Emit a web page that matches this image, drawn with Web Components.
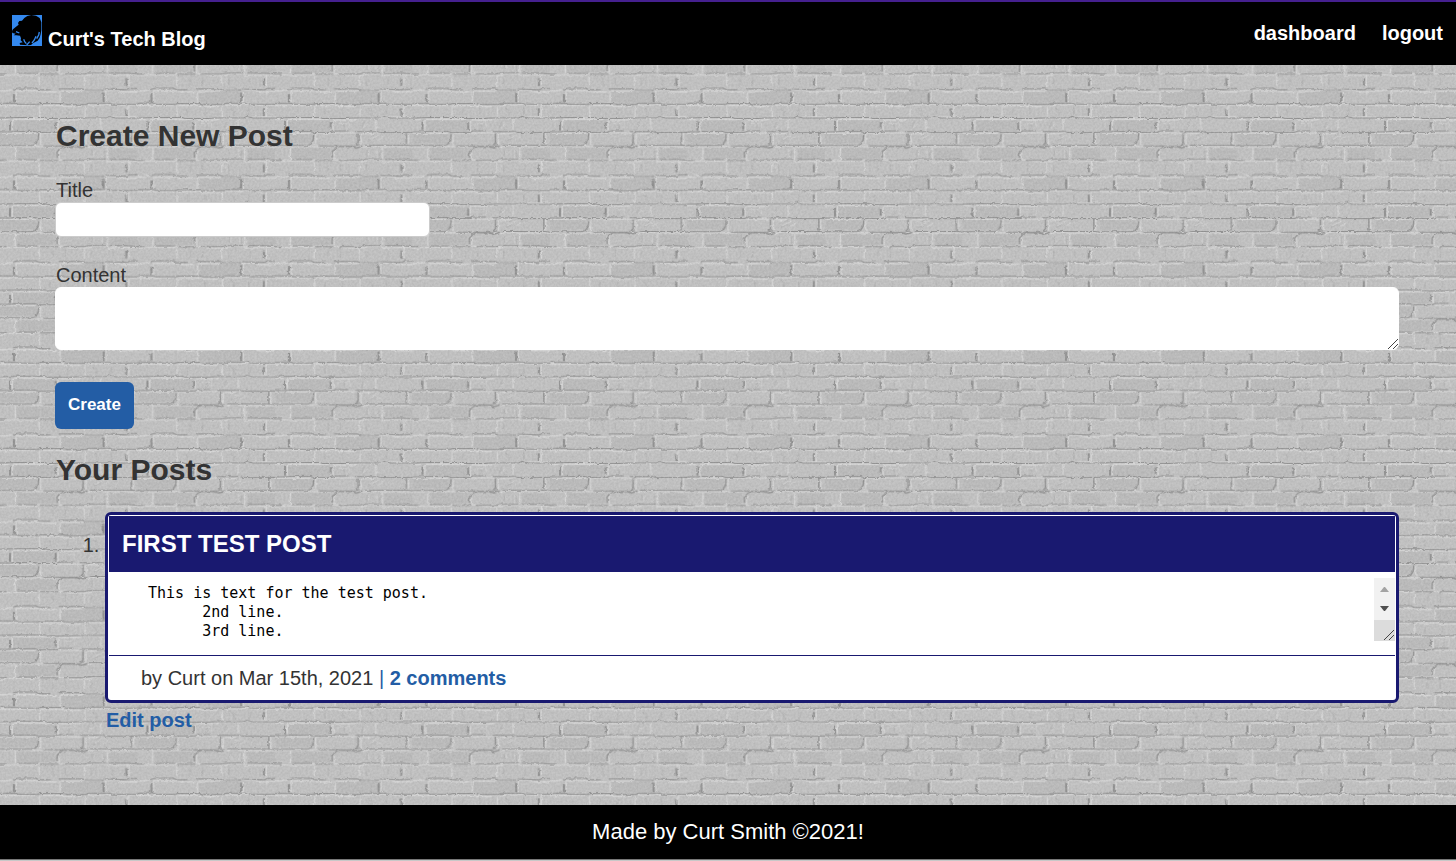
<!DOCTYPE html>
<html lang="en">
<head>
<meta charset="utf-8">
<meta name="viewport" content="width=device-width, initial-scale=1">
<title>Curt's Tech Blog</title>
<style>
  body { margin: 0; }
</style>
</head>
<body>
<blog-app></blog-app>

<script>
/* One brick tile, drawn at three times its size and repeated by a pattern. */
const wall = `<svg xmlns="http://www.w3.org/2000/svg" width="550" height="345">
<defs>
<pattern id="b" width="412.5" height="258.75" patternUnits="userSpaceOnUse" patternTransform="scale(.33333)">
<rect width="413" height="259" fill="#c0c0c0"/>
<g fill="#b9b9b9"><path d="M185 16h122v33H185zM40 103h124v30H40zM0 142h110v28H0zM52 186h112v30H52zM330 188h83v28h-83z"/></g>
<g fill="none" stroke="#d6d6d6" stroke-width="4">
<path d="M0 14h20l6-2h12M48 14h70l8 3h45M182 15h60l10-3h52M316 13h40l5 4h52"/>
<path d="M0 58h108M122 58h66l6 3h50M262 57h50l5-3 60 4M388 57h25"/>
<path d="M0 100h26M38 99h124M176 101h60l12-4h70l6-4h89"/>
<path d="M0 141h108M124 140h122M262 142h26l24-4h80"/>
<path d="M0 181h166M176 188l14-8h54l22 3 22-6 30 5h95"/>
<path d="M0 228l28-3h82l8-4h80l10 5h60l9-4h40l8 5 44-2h44"/>
<path d="M48 14v34M180 15v34M318 14v34M119 57v36M255 58v34M386 57v36M37 101v32M174 103v30M302 98v32M122 142v34M258 143v32M400 140v34M46 184v36M178 188v30M322 184v34M118 228v31M253 228v31M387 226v33"/>
</g>
<g fill="none" stroke="#8e8e8e" stroke-width="4">
<path d="M0 51h48l6 3h60l6-2h70l10 2h60l5-3h66l6 3h76M0 95l55-1h80l8 3h72l14-2h90l8-4 20 4h66M0 137h34l6-2h66l8 3h58l10-4h38M240 136h68l8 2h97M0 178h96l12-5M130 179h110l14-4M270 177h130l13 2" stroke-width="3"/>
<path d="M0 222h20M52 220h60M120 222h55M190 222h64l10-3h54M330 219h50l33 3M40 10l12-4h56l9 5h34M176 8h70l11 4h54M315 9l66 2 8-4h24" stroke-width="3"/>
<path d="M116 144l-2 18-8 12M249 142v27l-7 7M394 140v34M171 215v-18l8-9 9-7h42l14 4 18-5"/>
<path d="M42 24v24M311 19v29" stroke-width="7"/><path d="M379 66v23M30 106v27M167 108v22M379 234v24" stroke-width="6"/>
</g>
<path d="M150 66v20M203 64v23M278 65l12 8v16M334 65v21M207 108v20M268 106l-8 20M290 148l14-7M280 165l20-9M276 191v19M312 192v22M159 236v18M196 234v20M274 234v21M338 236v18" fill="none" stroke="#b2b2b2" stroke-width="3"/>
<path d="M190 112h25M222 105v20M278 112l-13 12M285 160l28-15M307 163l18-12M281 194v15M307 191v22M266 236v18" fill="none" stroke="#cfcfcf" stroke-width="3"/>
</pattern>
<filter id="r" x="0" y="0" width="1" height="1" color-interpolation-filters="sRGB">
<feTurbulence type="fractalNoise" baseFrequency=".24" numOctaves="2" seed="4" stitchTiles="stitch" result="n"/>
<feDisplacementMap in="SourceGraphic" in2="n" scale="3" xChannelSelector="R" yChannelSelector="G"/>
</filter>
<filter id="g" x="0" y="0" width="1" height="1" color-interpolation-filters="sRGB">
<feTurbulence type="fractalNoise" baseFrequency=".45" numOctaves="2" seed="9" stitchTiles="stitch"/>
<feColorMatrix values=".8 0 0 0 .34 .8 0 0 0 .34 .8 0 0 0 .34 0 0 0 0 .17"/>
</filter>
</defs>
<rect width="550" height="345" fill="#c0c0c0"/>
<rect width="550" height="345" fill="url(#b)" filter="url(#r)"/>
<rect width="550" height="345" filter="url(#g)" opacity=".7"/>
</svg>`;
const wallUrl = 'data:image/svg+xml,' + encodeURIComponent(wall);

function define(name, html, setup) {
  const template = document.createElement('template');
  template.innerHTML = html;
  customElements.define(name, class extends HTMLElement {
    constructor() {
      super();
      this.attachShadow({ mode: 'open' }).append(template.content.cloneNode(true));
    }
    connectedCallback() { if (setup) setup(this); }
  });
}

define('site-header', `
<style>
  :host { display: block; background: #000; border-top: 2px solid #45208f; font-weight: bold; }
  header { display: flex; justify-content: space-between; align-items: flex-start; padding: 13px 13px 19px 12px; }
  a { color: #fff; text-decoration: none; }
  .brand { display: flex; align-items: flex-start; gap: 6px; height: 31px; }
  .brand svg { display: block; flex: none; }
  .brand span { padding-top: 12px; }
  nav { display: flex; gap: 26px; padding-top: 6px; }
</style>
<header>
  <a class="brand" href="#home">
    <svg width="30" height="31" viewBox="0 0 90 93" aria-hidden="true">
      <path fill="#3489ef" d="M0 0h90v93H0z"/>
      <path d="M0 48L3 43L14 34L20 29L18 24L22 18L30 17L37 9L46 3L58 0L72 2L83 9L88 22V46L86 58L83 68L77 77L71 80L64 84L57 90L48 91L36 90L24 89L23 84L32 82L26 76L27 70L24 62L13 61L5 61L11 56L1 54Z"/>
      <path d="M35 73L38 80L43 86M44 90L53 80M60 84L67 75L72 64M74 71L80 60L82 51M12 50L22 54" fill="none" stroke="#3489ef" stroke-width="4"/>
    </svg>
    <span>Curt's Tech Blog</span>
  </a>
  <nav><a href="#dashboard">dashboard</a><a href="#logout">logout</a></nav>
</header>`);

define('new-post-form', `
<style>
  :host { display: block; }
  form { display: flex; flex-direction: column; align-items: flex-start; }
  label { display: block; padding-left: 1px; }
  input, textarea { box-sizing: border-box; margin: 0; padding: 6px 8px; border: 1px solid #ccc; border-radius: 6px; background: #fff; color: #333; font: inherit; outline: 0; }
  input { width: 375px; max-width: 100%; height: 35px; margin-bottom: 26px; }
  .area { position: relative; width: 100%; margin-bottom: 32px; }
  textarea { display: block; width: 100%; height: 63px; border-color: #fff; resize: none; }
  .grip { position: absolute; right: 1px; bottom: 1px; }
  button { height: 47px; padding: 0 13px 2px; border: 0; border-radius: 6px; background: #235da5; color: #fff; font: bold 17px/20px "Liberation Sans", Arial, sans-serif; }
</style>
<form>
  <label for="title">Title</label>
  <input id="title" type="text">
  <label for="content">Content</label>
  <div class="area">
    <textarea id="content"></textarea>
    <svg class="grip" width="10" height="10" aria-hidden="true"><path d="M0 10L10 0M5 10l5-5" stroke="#444" fill="none"/></svg>
  </div>
  <button type="button">Create</button>
</form>`);

define('post-card', `
<style>
  :host { display: block; border: 3px solid #191970; border-radius: 6px; background: #fff; padding: 1px 1px 0; }
  h3 { margin: 0; padding: 14px 13px; background: #191970; color: #fff; font-size: 24px; line-height: 28px; text-transform: uppercase; }
  .body { display: flex; padding: 6px 0 14px; border-bottom: 1px solid #191970; }
  textarea { flex: 1; min-width: 0; box-sizing: border-box; height: 63px; margin: 0; padding: 6px 0 0 39px; border: 0; background: #fff; color: #000; font: 15px/19px "DejaVu Sans Mono", monospace; resize: none; overflow: hidden; outline: 0; }
  svg { display: block; flex: none; }
  footer { padding: 10px 32px; }
</style>
<h3><slot name="title"></slot></h3>
<div class="body">
  <textarea readonly aria-label="Post text"></textarea>
  <svg width="21" height="63" aria-hidden="true">
    <path fill="#f1f1f1" d="M0 0h21v42H0z"/><path fill="#dcdcdc" d="M0 42h21v21H0z"/>
    <path fill="#a3a3a3" d="M6 14l4-5h1l4 5z"/><path fill="#505050" d="M6 28h9l-4 5h-1z"/>
    <path stroke="#444" d="M10 62l10-10M15 62l5-5"/>
  </svg>
</div>
<footer><slot></slot></footer>`, el => {
  el.shadowRoot.querySelector('textarea').value = el.getAttribute('text');
});

define('post-list', `
<style>
  :host { display: block; }
  ol { margin: 0; padding-left: 50px; }
  a { color: #235da5; font-weight: bold; text-decoration: none; }
  .bar { color: #235da5; }
  .edit { display: block; width: fit-content; margin: 5px 0 0 1px; }
</style>
<ol>
  <li>
    <post-card text="This is text for the test post.&#10;      2nd line.&#10;      3rd line."><span slot="title">First test post</span>by Curt on Mar 15th, 2021 <span class="bar">|</span> <a href="#comments">2 comments</a></post-card>
    <a class="edit" href="#edit">Edit post</a>
  </li>
</ol>`);

define('site-footer', `
<style>
  :host { display: block; background: #000; color: #fff; border-bottom: 1px solid #c8c8c8; text-align: center; }
  footer { padding: 14px 16px; font-size: 22px; line-height: 26px; border-bottom: 1px solid #777; }
</style>
<footer>Made by Curt Smith ©2021!</footer>`);

define('blog-app', `
<style>
  :host { display: flex; flex-direction: column; min-height: 100vh; color: #333; font: 20px/24px "Liberation Sans", Arial, sans-serif; background: #c0c0c0 var(--wall); }
  main { flex: 1; padding: 53px 57px 40px 55px; }
  h2 { margin: 0 0 24px; padding-left: 1px; font-size: 30px; line-height: 36px; }
  new-post-form { margin-bottom: 23px; }
</style>
<site-header></site-header>
<main>
  <h2>Create New Post</h2>
  <new-post-form></new-post-form>
  <h2>Your Posts</h2>
  <post-list></post-list>
</main>
<site-footer></site-footer>`, el => {
  el.style.setProperty('--wall', 'url("' + wallUrl.replace(/\(/g, '%28').replace(/\)/g, '%29') + '")');
});
</script>
</body>
</html>
